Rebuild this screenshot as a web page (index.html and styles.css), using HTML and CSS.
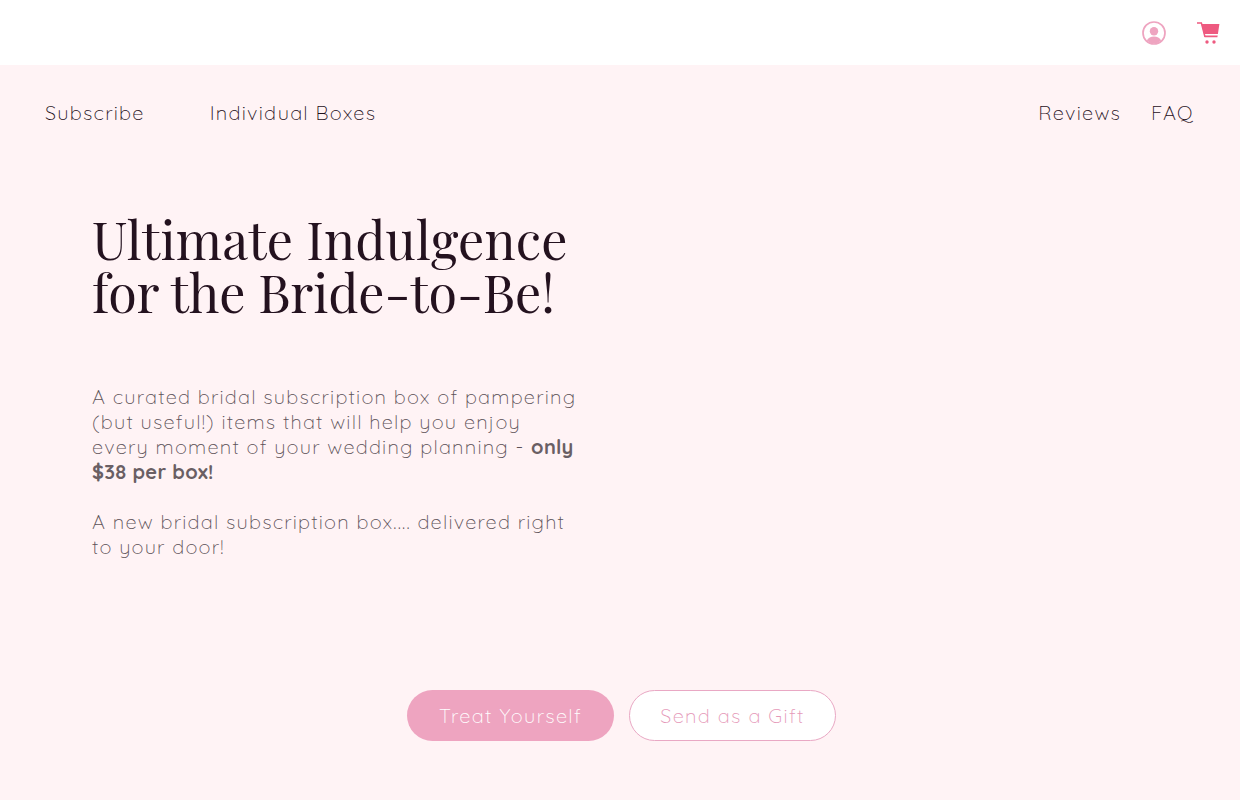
FILE: index.html
```html
<!DOCTYPE html>
<html lang="en">
<head>
<meta charset="utf-8">
<title>Bridal Box</title>
<link rel="stylesheet" href="styles.css">
</head>
<body>
<header class="topbar">
  <svg class="icon-user" viewBox="0 0 24 24" width="24" height="24" aria-hidden="true"><circle cx="12" cy="12" r="11" fill="none" stroke="#eea4c0" stroke-width="1.7"/><circle cx="12" cy="10.2" r="4.2" fill="#eea4c0"/><path d="M4.8 19.6c1.4-2.9 4-4 7.2-4s5.8 1.1 7.2 4A10.5 10.5 0 0 1 12 22.6a10.5 10.5 0 0 1-7.2-3z" fill="#eea4c0"/></svg>
  <svg class="icon-cart" viewBox="0 0 24 24" width="24" height="24" aria-hidden="true"><path d="M1 3h4.4l3.6 14" fill="none" stroke="#ee5a80" stroke-width="1.5"/><path fill="#ee5a80" d="M5.4 4H23.4L21.9 14H8zM8.6 15.4H21.7L21.4 17.2H9z"/><circle cx="11" cy="22" r="1.7" fill="#ee5a80"/><circle cx="18" cy="22" r="1.7" fill="#ee5a80"/></svg>
</header>
<main class="page">
  <nav class="nav">
    <div class="nav-left"><a>Subscribe</a><a>Individual Boxes</a></div>
    <div class="nav-right"><a>Reviews</a><a>FAQ</a></div>
  </nav>
  <section class="hero">
    <h1>Ultimate Indulgence<br><span class="line-two">for the Bride-to-Be!</span></h1>
    <p>A curated bridal subscription box of pampering (but useful!) items that will help you enjoy every moment of your wedding planning - <b>only $38 per box!</b></p>
    <p>A new bridal subscription box.... delivered right to your door!</p>
  </section>
  <div class="actions">
    <a class="btn btn-fill">Treat Yourself</a>
    <a class="btn btn-line">Send as a Gift</a>
  </div>
</main>
</body>
</html>
```
FILE: styles.css
```css
* { box-sizing: border-box; }
html, body { margin: 0; height: 100%; }
body { width: 1240px; height: 800px; overflow: hidden; background: #fff3f5; font-family: "Quicksand", "Nunito", "Lato", "Open Sans", sans-serif; font-weight: 300; }
.topbar { height: 65px; background: #fff; display: flex; justify-content: flex-end; align-items: center; gap: 30px; padding: 0 20px 0 0; }
.icon-user { margin-top: 1px; }
.icon-cart { margin-bottom: 1px; }
.page { display: flex; flex-direction: column; }
.nav { display: flex; justify-content: space-between; padding: 35px 46px 0 45px; font-size: 20px; letter-spacing: 1.25px; line-height: 26px; color: #1e0f1a; font-weight: 300; }
.nav-left { display: flex; gap: 65px; }
.nav-right { display: flex; gap: 30px; }
.hero { width: 580px; margin: 0 0 0 92px; padding-top: 86px; }
h1 { margin: 0 0 66px; font-family: "Playfair Display", "Liberation Serif", serif; font-weight: 400; font-size: 52px; line-height: 53px; letter-spacing: .15px; color: #24121f; }
.line-two { letter-spacing: -.15px; }
p { margin: 0 0 25px; width: 490px; font-size: 20px; line-height: 25px; letter-spacing: 1.2px; color: #5c5157; }
p b { font-weight: 700; letter-spacing: .3px; color: #6a5f64; }
.actions { display: flex; gap: 15px; margin: 106px 0 0 407px; }
.btn { width: 207px; height: 51px; border-radius: 26px; display: flex; align-items: center; justify-content: center; font-size: 20px; letter-spacing: 1.3px; font-weight: 300; }
.btn-fill { background: #eea4c0; color: #fff; }
.btn-line { border: 1px solid #e9a8c4; color: #e598b8; background: #fff; }
```
